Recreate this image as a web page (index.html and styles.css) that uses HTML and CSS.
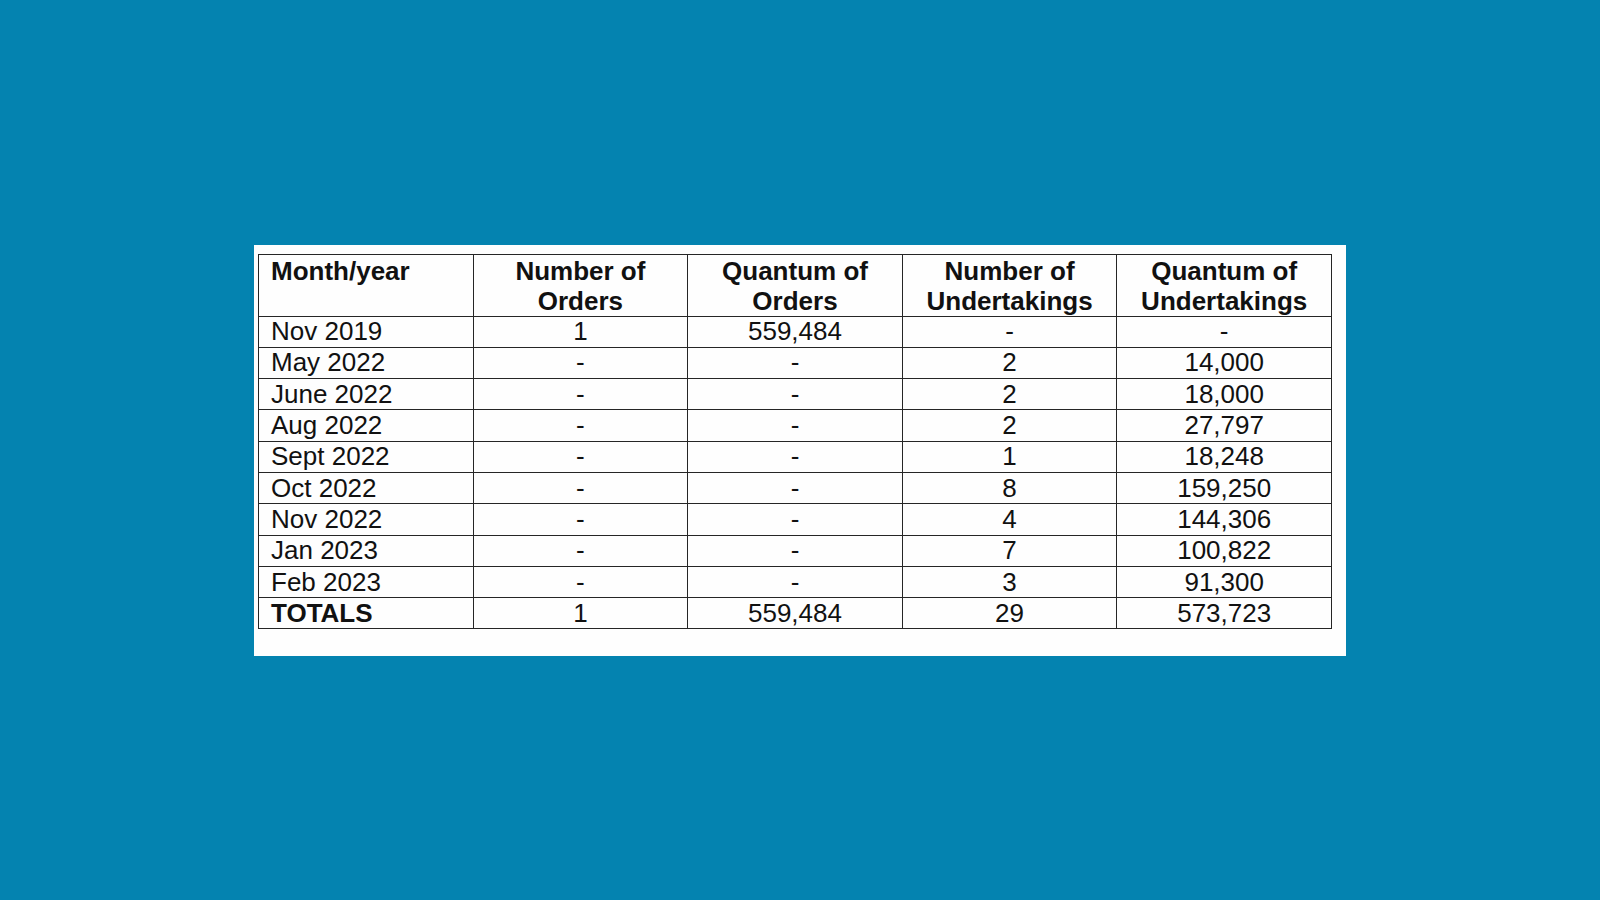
FILE: index.html
```html
<!DOCTYPE html>
<html lang="en">
<head>
<meta charset="utf-8">
<title>Orders and Undertakings</title>
<link rel="stylesheet" href="styles.css">
</head>
<body>
<main class="stage">
  <section class="sheet">
    <table class="data">
      <thead>
        <tr>
          <th class="first">Month/year</th>
          <th>Number of<br>Orders</th>
          <th>Quantum of<br>Orders</th>
          <th>Number of<br>Undertakings</th>
          <th>Quantum of<br>Undertakings</th>
        </tr>
      </thead>
      <tbody>
        <tr><td class="first">Nov 2019</td><td>1</td><td>559,484</td><td>-</td><td>-</td></tr>
        <tr><td class="first">May 2022</td><td>-</td><td>-</td><td>2</td><td>14,000</td></tr>
        <tr><td class="first">June 2022</td><td>-</td><td>-</td><td>2</td><td>18,000</td></tr>
        <tr><td class="first">Aug 2022</td><td>-</td><td>-</td><td>2</td><td>27,797</td></tr>
        <tr><td class="first">Sept 2022</td><td>-</td><td>-</td><td>1</td><td>18,248</td></tr>
        <tr><td class="first">Oct 2022</td><td>-</td><td>-</td><td>8</td><td>159,250</td></tr>
        <tr><td class="first">Nov 2022</td><td>-</td><td>-</td><td>4</td><td>144,306</td></tr>
        <tr><td class="first">Jan 2023</td><td>-</td><td>-</td><td>7</td><td>100,822</td></tr>
        <tr><td class="first">Feb 2023</td><td>-</td><td>-</td><td>3</td><td>91,300</td></tr>
        <tr class="totals"><td class="first">TOTALS</td><td>1</td><td>559,484</td><td>29</td><td>573,723</td></tr>
      </tbody>
    </table>
  </section>
</main>
</body>
</html>
```

FILE: styles.css
```css
html, body {
  margin: 0;
  padding: 0;
}

body {
  background: #0483b0;
  font-family: "Liberation Sans", Arial, sans-serif;
  color: #111;
}

.stage {
  min-height: 900px;
  display: flex;
  align-items: center;
  justify-content: center;
}

.sheet {
  background: #fefefe;
  width: 1092px;
  height: 411px;
  box-sizing: border-box;
  padding: 9px 0 0 4px;
}

.data {
  border-collapse: collapse;
  width: 1074px;
  table-layout: fixed;
  font-size: 26px;
}

.data th,
.data td {
  border: 1px solid #262626;
  text-align: center;
  padding: 0 12px;
  overflow: hidden;
  white-space: nowrap;
}

.data th {
  font-weight: bold;
  line-height: 30px;
  height: 59px;
  padding-top: 1px;
  vertical-align: top;
}

.data td {
  line-height: 29px;
  height: 30.3px;
  vertical-align: middle;
}

.data .first {
  text-align: left;
}

.totals .first {
  font-weight: bold;
}
```
